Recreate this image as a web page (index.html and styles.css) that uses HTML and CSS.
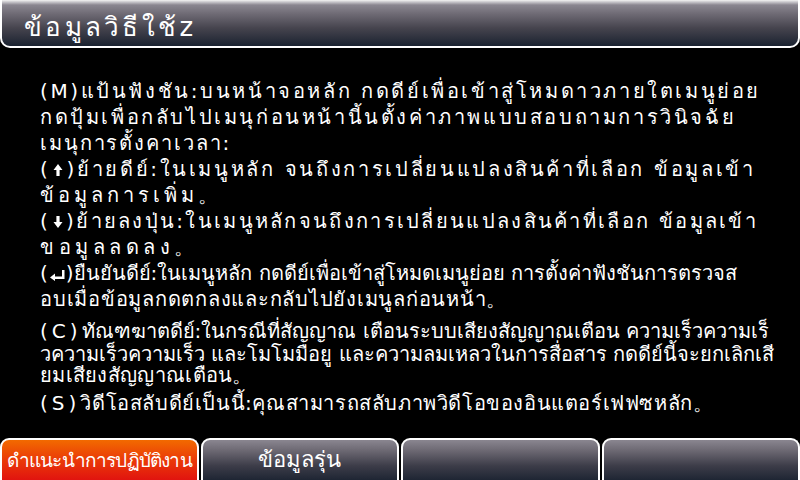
FILE: index.html
```html
<!DOCTYPE html>
<html lang="th">
<head>
<meta charset="utf-8">
<link rel="stylesheet" href="styles.css">
</head>
<body>
<div class="screen">
  <header class="titlebar"><h1 class="title">ข้อมูลวิธีใช้z</h1></header>
  <main class="help">
    <div class="ln l1">(M)แป้นฟังชัน:บนหน้าจอหลัก กดดีย์เพื่อเข้าสู่โหมดาวภายใตเมนูย่อย</div>
    <div class="ln l2">กดปุ้มเพื่อกลับไปเมนุก่อนหน้านี้นตั้งค่าภาพแบบสอบถามการวินิจฉัย</div>
    <div class="ln l3">เมนุการตั้งคาเวลา:</div>
    <div class="ln l4">(<svg class="ic" viewBox="0 0 10 14"><path d="M5 1 L9.5 7 H6.6 V13 H3.4 V7 H0.5 Z" fill="#fff"/></svg>)ย้ายดีย์:ในเมนูหลัก จนถึงการเปลี่ยนแปลงสินค้าที่เลือก ข้อมูลเข้า</div>
    <div class="ln l5">ข้อมูลการเพิ่ม。</div>
    <div class="ln l6">(<svg class="ic" viewBox="0 0 10 14"><path d="M5 13 L9.5 7 H6.6 V1 H3.4 V7 H0.5 Z" fill="#fff"/></svg>)ย้ายลงปุ่น:ในเมนูหลักจนถึงการเปลี่ยนแปลงสินค้าที่เลือก ข้อมูลเข้า</div>
    <div class="ln l7">ขอมูลลดลง。</div>
    <div class="ln l8">(<svg class="ic ent" viewBox="0 0 16 12"><path d="M13 1 V7.5 H6 V4.5 L1 8.5 L6 12 V10 H15.5 V1 Z" fill="#fff"/></svg>)ยืนยันดีย์:ในเมนูหลัก กดดีย์เพื่อเข้าสู่โหมดเมนูย่อย การตั้งค่าฟังชันการตรวจส</div>
    <div class="ln l9">อบเมื่อข้อมูลกดตกลงและกลับไปยังเมนูลก่อนหน้า。</div>
    <div class="ln l10"><span class="key">(C)</span>ทัณฑฆาตดีย์:ในกรณีที่สัญญาณ เตือนระบบเสียงสัญญาณเตือน ความเร็วความเร็</div>
    <div class="ln l11 close">วความเร็วความเร็ว และโมโมมือยู และความลมเหลวในการสื่อสาร กดดีย์นี้จะยกเลิกเสี</div>
    <div class="ln l12 close">ยมเสียงสัญญาณเตือน。</div>
    <div class="ln l13"><span class="key">(S)</span>วิดีโอสลับดีย์เป็นนี้:คุณสามารถสลับภาพวิดีโอของอินแตอร์เฟฟซหลัก。</div>
  </main>
  <nav class="tabs">
    <div class="tab active">ดำแนะนำการปฏิบัติงาน</div>
    <div class="tab">ข้อมูลรุ่น</div>
    <div class="tab"></div>
    <div class="tab"></div>
  </nav>
</div>
</body>
</html>
```
FILE: styles.css
```css
html, body { margin: 0; padding: 0; background: #000; }
.screen {
  width: 800px; height: 480px; background: #000; color: #fff;
  display: flex; flex-direction: column; overflow: hidden;
  font-family: "DejaVu Sans", sans-serif;
}
.titlebar {
  height: 46px; box-sizing: content-box;
  border: 2px solid #fff; border-top: 0;
  border-radius: 0 0 10px 10px;
  background: linear-gradient(#f4f4f4 0, #c8c6cb 2px, #8a8690 5px, #6e6a74 14px, #46444e 28px, #1a2230 46px);
  display: flex; align-items: center;
}
.title { margin: 6px 0 0 22px; font-size: 26px; font-weight: normal; letter-spacing: 3.3px; }
.help { flex: 1; padding: 30px 0 0 40px; }
.ln { font-size: 20px; line-height: 26px; white-space: nowrap; letter-spacing: 2px; }
.l1 { letter-spacing: 2.6px; }
.l2 { letter-spacing: 2.6px; }
.l3 { letter-spacing: 1.9px; }
.l4 { letter-spacing: 2.65px; }
.l5 { letter-spacing: 4px; }
.l6 { letter-spacing: 2.3px; }
.l7 { letter-spacing: 4.5px; }
.l8 { letter-spacing: 0; }
.l9 { letter-spacing: 0.75px; }
.l10 { letter-spacing: 0; margin-top: 6px; }
.l11 { letter-spacing: 0; }
.l12 { letter-spacing: 0.3px; }
.l13 { letter-spacing: 0.6px; margin-top: 4px; }
.close { line-height: 21px; }
.key { letter-spacing: 4px; }
.ic { width: 10px; height: 14px; vertical-align: -1px; margin: 0 3px; }
.ic.ent { width: 16px; height: 12px; margin: 0 1px; }
.tabs { display: flex; gap: 2px; height: 42px; }
.tab {
  flex: 1; border: 2px solid #fff; border-bottom: 0; border-radius: 9px 9px 0 0;
  background: linear-gradient(#8a8690 0, #6e6a74 10px, #3c3c48 26px, #1a2230 42px);
  text-align: center; font-size: 22px; line-height: 40px; white-space: nowrap;
}
.tab.active { background: linear-gradient(#f26a00 0, #ea3a08 20px, #e01010 42px); font-size: 19px; letter-spacing: -0.8px; }
```
